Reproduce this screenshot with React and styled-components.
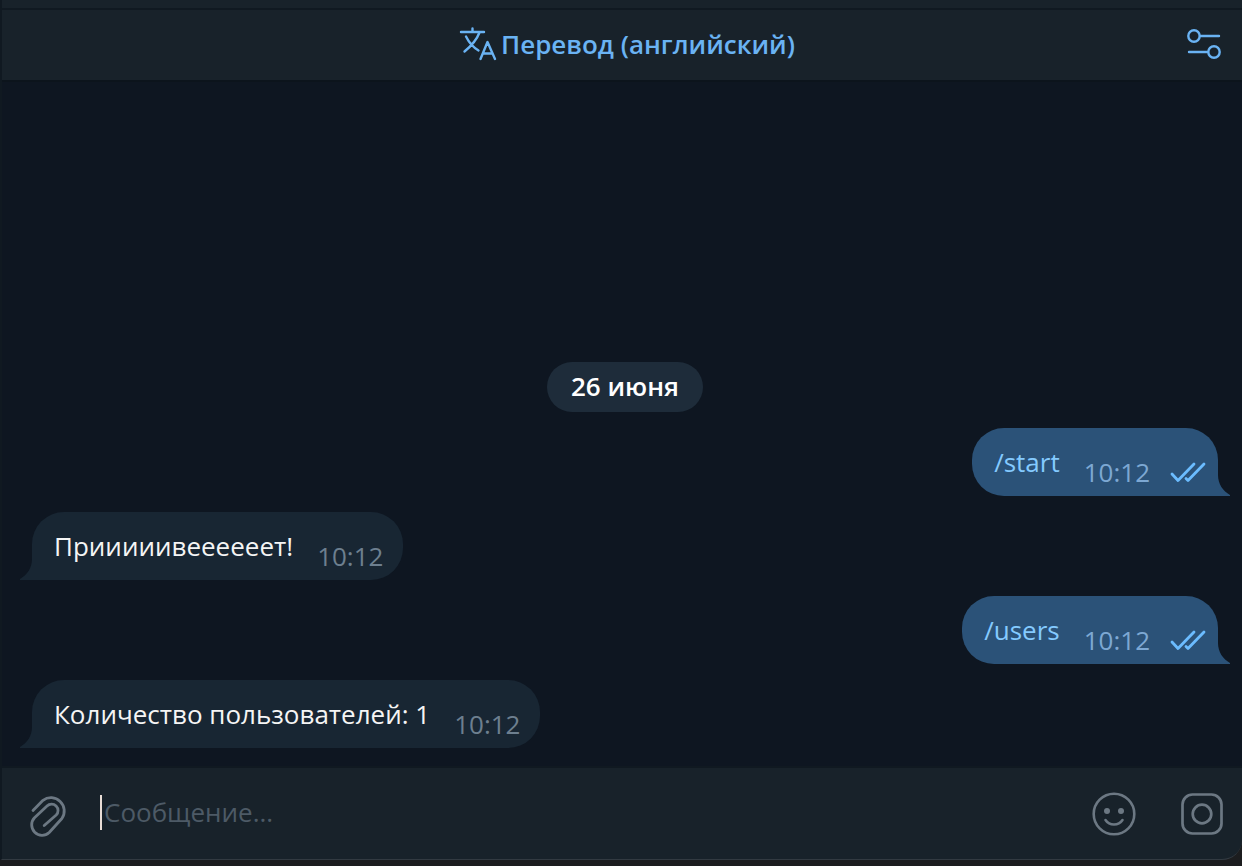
import React, { useState } from 'react';
import styled, { createGlobalStyle } from 'styled-components';

const colors = {
	bar: '#18222a',
	chat: '#0e1621',
	line: '#101921',
	accent: '#6ab3f3',
	incoming: '#182633',
	outgoing: '#2b5278',
	muted: '#6d7f8f',
	icon: '#6c7883',
};

const GlobalStyle = createGlobalStyle`
	* {
		box-sizing: border-box;
	}
	body {
		margin: 0;
		background: #1c1d1f;
		font-family: 'Open Sans', 'Noto Sans', sans-serif;
		font-size: 26px;
		line-height: 36px;
	}
`;

const Page = styled.div`
	display: flex;
	flex-direction: column;
	min-height: 100vh;
	padding-bottom: 6px;
`;

const Window = styled.div`
	display: flex;
	flex-direction: column;
	flex: 1;
	overflow: hidden;
	background: ${colors.bar};
	border-left: 2px solid ${colors.line};
	border-bottom: 1px solid #323a41;
	border-bottom-right-radius: 20px;
`;

const TopStrip = styled.div`
	height: 10px;
	border-bottom: 2px solid ${colors.line};
`;

const TranslateBar = styled.header`
	display: flex;
	align-items: center;
	height: 72px;
	padding: 0 20px 2px;
	border-bottom: 2px solid #0c141c;
`;

const IconButton = styled.button`
	display: flex;
	padding: 0;
	border: 0;
	background: none;
	color: ${({ $accent }) => ($accent ? colors.accent : colors.icon)};
	cursor: pointer;
`;

const TranslateButton = styled.button`
	display: flex;
	flex: 1;
	align-items: center;
	justify-content: center;
	gap: 4px;
	padding: 0 0 0 46px;
	border: 0;
	background: none;
	color: ${colors.accent};
	font: inherit;
	font-weight: 600;
	cursor: pointer;
`;

const Chat = styled.main`
	display: flex;
	flex: 1;
	flex-direction: column;
	justify-content: flex-end;
	gap: 16px;
	padding: 18px 24px 18px 30px;
	background: ${colors.chat};
`;

const DateBadge = styled.time`
	align-self: center;
	padding: 6px 24px 8px;
	border-radius: 25px;
	background: #1e2c3a;
	color: #fff;
	font-weight: 600;
`;

const Bubble = styled.article`
	position: relative;
	display: flex;
	align-self: ${({ $own }) => ($own ? 'flex-end' : 'flex-start')};
	height: 68px;
	padding: ${({ $own }) => ($own ? '0 12px 0 22px' : '0 20px 0 22px')};
	border-radius: ${({ $own }) => ($own ? '32px 32px 0 32px' : '32px 32px 32px 0')};
	background: ${({ $own }) => ($own ? colors.outgoing : colors.incoming)};
	color: ${({ $own }) => ($own ? colors.outgoing : colors.incoming)};
`;

const TailSvg = styled.svg`
	position: absolute;
	bottom: 0;
	${({ $own }) => ($own ? 'left: 100%;' : 'right: 100%; transform: scaleX(-1);')}
`;

const Text = styled.p`
	margin: 0;
	padding-top: 16px;
	color: ${({ $own }) => ($own ? '#84caff' : '#f5f5f5')};
`;

const Meta = styled.div`
	display: flex;
	gap: 20px;
	padding: 26px 0 0 24px;
	color: ${({ $own }) => ($own ? '#7da8d3' : colors.muted)};
`;

const ChecksSvg = styled.svg`
	margin-top: 8px;
	color: #6bbcff;
`;

const Composer = styled.form`
	display: flex;
	align-items: center;
	height: 93px;
	padding: 0 19px 0 26px;
	border-top: 2px solid ${colors.line};
`;

const Field = styled.label`
	display: flex;
	flex: 1;
	align-items: center;
	margin: 0 24px 0 30px;
	padding-bottom: 2px;

	&::before {
		content: '';
		width: 2px;
		height: 35px;
		background: #e8ddd6;
	}
`;

const MessageInput = styled.input`
	flex: 1;
	min-width: 0;
	padding: 0 2px 2px;
	border: 0;
	outline: 0;
	background: none;
	color: #f5f5f5;
	font: inherit;

	&::placeholder {
		color: #4d5a66;
		opacity: 1;
	}
`;

const Actions = styled.div`
	display: flex;
	align-items: center;
	gap: 45px;
`;

const stroke = {
	fill: 'none',
	stroke: 'currentColor',
	strokeLinecap: 'round',
	strokeLinejoin: 'round',
	'aria-hidden': true,
};

const TranslateIcon = () => (
	<svg width="38" height="36" viewBox="0 0 38 36" strokeWidth="2.4" {...stroke}>
		<path d="M2 6h23M13.5 2.5V6M20.5 6.5C18 13 11 21 5.5 25.500M7 10.500c3 6 7.500 11 12.500 14M21.500 33l7-17 7.500 17M24 27.500h9.500" />
	</svg>
);

const SettingsIcon = () => (
	<svg width="36" height="32" viewBox="0 0 36 32" strokeWidth="2.4" {...stroke}>
		<circle cx="8" cy="8" r="5.7" />
		<path d="M14 8h19M3 24h19" />
		<circle cx="28" cy="24" r="5.7" />
	</svg>
);

const Tail = ({ own }) => (
	<TailSvg $own={own} width="12" height="32" viewBox="0 0 12 32" aria-hidden="true">
		<path d="M0 0v32h12v-1C5 27 0 20 0 11z" fill="currentColor" />
	</TailSvg>
);

const Checks = () => (
	<ChecksSvg width="36" height="22" viewBox="0 0 36 22" strokeWidth="2.8" {...stroke}>
		<path d="M2 12l6 6.500L24 2M16 16.500l2 2L34 2" />
	</ChecksSvg>
);

const ClipIcon = () => (
	<svg width="42" height="48" viewBox="0 -1 42 48" strokeWidth="2.8" {...stroke}>
		<path d="M5 19.500L15 9.300A13.300 13.300 0 0 1 33.900 27.500L21.200 41.500A10.400 10.400 0 0 1 6.500 26.800L19 15A6.400 6.400 0 0 1 28.200 24L16.200 34.500" />
	</svg>
);

const SmileIcon = () => (
	<svg width="44" height="44" viewBox="0 0 44 44" strokeWidth="2.6" {...stroke}>
		<circle cx="22" cy="22" r="20.3" />
		<circle cx="15" cy="19" r="3" fill="currentColor" stroke="none" />
		<circle cx="29" cy="19" r="3" fill="currentColor" stroke="none" />
		<path d="M13.500 28c4 6 13 6 17 0" />
	</svg>
);

const CameraIcon = () => (
	<svg width="42" height="42" viewBox="0 0 42 42" strokeWidth="2.7" {...stroke}>
		<rect x="1.5" y="1.5" width="39" height="39" rx="10" />
		<circle cx="21" cy="21" r="9.3" />
	</svg>
);

const messages = [
	{ id: 1, text: '/start', time: '10:12', own: true },
	{ id: 2, text: 'Прииииивеееееет!', time: '10:12' },
	{ id: 3, text: '/users', time: '10:12', own: true },
	{ id: 4, text: 'Количество пользователей: 1', time: '10:12' },
];

const Message = ({ text, time, own }) => (
	<Bubble $own={own}>
		<Text $own={own}>{text}</Text>
		<Meta $own={own}>
			<time>{time}</time>
			{own && <Checks />}
		</Meta>
		<Tail own={own} />
	</Bubble>
);

const App = () => {
	const [value, setValue] = useState('');

	return (
		<Page>
			<GlobalStyle />
			<Window>
				<TopStrip />
				<TranslateBar>
					<TranslateButton type="button">
						<TranslateIcon />
						Перевод (английский)
					</TranslateButton>
					<IconButton $accent type="button" aria-label="Настройки перевода">
						<SettingsIcon />
					</IconButton>
				</TranslateBar>
				<Chat>
					<DateBadge>26 июня</DateBadge>
					{messages.map((message) => (
						<Message key={message.id} {...message} />
					))}
				</Chat>
				<Composer onSubmit={(e) => e.preventDefault()}>
					<IconButton type="button" aria-label="Прикрепить файл">
						<ClipIcon />
					</IconButton>
					<Field>
						<MessageInput
							aria-label="Сообщение"
							value={value}
							onChange={(e) => setValue(e.target.value)}
							type="text"
							placeholder="Сообщение..."
						/>
					</Field>
					<Actions>
						<IconButton type="button" aria-label="Эмодзи">
							<SmileIcon />
						</IconButton>
						<IconButton type="button" aria-label="Видеосообщение">
							<CameraIcon />
						</IconButton>
					</Actions>
				</Composer>
			</Window>
		</Page>
	);
};

export default App;
